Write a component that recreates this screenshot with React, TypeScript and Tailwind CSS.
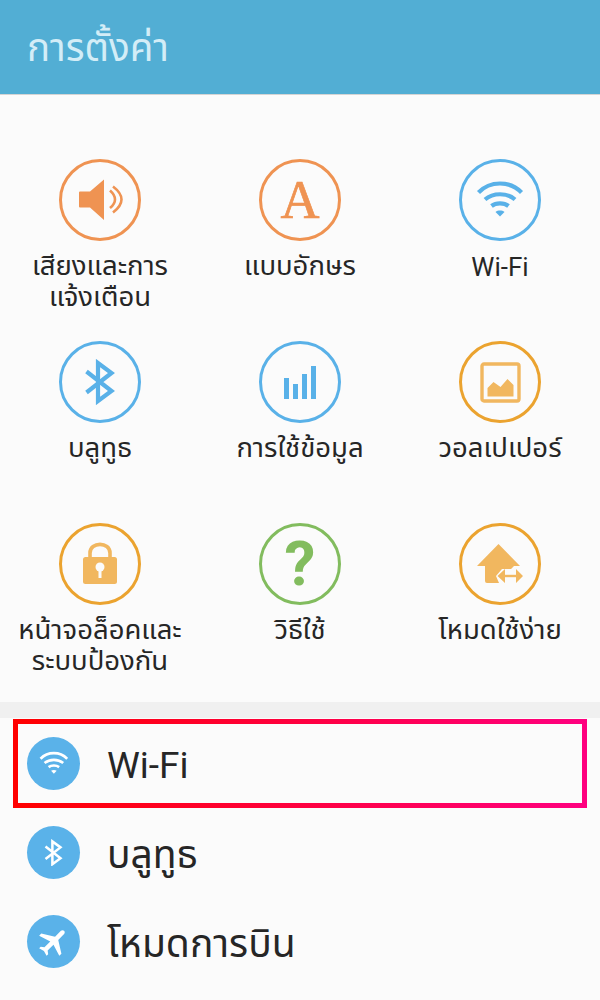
const FONT = "font-['Roboto','Noto_Sans','Noto_Sans_Thai',sans-serif]";

const Wifi = ({ c, s = 1 }: { c: string; s?: number }) => (
  <svg width={48 * s} height={40 * s} viewBox="0 1.5 48 40" fill="none" stroke={c} strokeWidth="4.2">
    <path d="M2.5 14 C14 2 34 2 45.5 14" />
    <path d="M9 21 C17 14 31 14 39 21" />
    <path d="M15.5 27.5 C20 24 28 24 32.5 27.5" />
    <path d="M24 38 L19.5 33.5 C22 31.6 26 31.6 28.5 33.5 Z" fill={c} stroke="none" />
  </svg>
);

const Bt = ({ c, s = 1 }: { c: string; s?: number }) => (
  <svg width={32 * s} height={46 * s} viewBox="0 0 32 46" fill="none" stroke={c} strokeWidth="4.2">
    <path d="M2.5 12.5 L27.5 32 L14 42 V4 L27.5 14 L2.5 33.5" />
  </svg>
);

const Speaker = () => (
  <svg className="ml-px" width="44" height="42" viewBox="0 0 44 42">
    <path d="M1 12.5 H11 L25 0.5 V41 L11 28.5 H1 Q0 28.5 0 27.5 V13.5 Q0 12.5 1 12.5 Z" fill="#ef9352" />
    <path d="M31 11.5 Q41 20.5 31 29" fill="none" stroke="#ef9352" strokeWidth="2.6" />
    <path d="M34 7.5 Q51 20.5 34 33.5" fill="none" stroke="#ef9352" strokeWidth="2.6" />
  </svg>
);

const Bars = () => (
  <svg width="32" height="33" viewBox="0 0 32 33" fill="#59b1e8">
    <rect x="0" y="12" width="5" height="21" />
    <rect x="9" y="18" width="5" height="15" />
    <rect x="18" y="8" width="5" height="25" />
    <rect x="27" y="0" width="5" height="33" />
  </svg>
);

const Picture = () => (
  <svg width="41" height="41" viewBox="0 0 41 41">
    <rect x="2" y="2" width="37" height="37" rx="2" fill="none" stroke="#f1b75f" strokeWidth="3.4" />
    <path d="M7.5 34.5 V26 L13.5 20 L20.5 25 L27.5 17 L33.5 23 V34.5 Z" fill="#f1b75f" />
  </svg>
);

const Lock = () => (
  <svg className="mb-[5px]" width="36" height="44" viewBox="0 0 36 44">
    <path d="M8 19 V13 C8 1.5 28 1.5 28 13 V19" fill="none" stroke="#f1b75f" strokeWidth="3.6" />
    <rect x="1" y="17" width="34" height="27" rx="2.5" fill="#f1b75f" />
    <circle cx="18" cy="27" r="4.5" fill="#fbfbfb" />
    <rect x="16.5" y="28" width="3" height="10" fill="#fbfbfb" />
  </svg>
);

const Home = () => (
  <svg width="46" height="40" viewBox="0 0 46 40">
    <path d="M21.5 0 L43 22 H37 L34 25 H25 L19 32 L22 39 H10 Q8 39 8 37 V22 H0 Z" fill="#f1b75f" />
    <path d="M27 32 H40" stroke="#f1b75f" strokeWidth="2.4" />
    <path d="M20.5 32 L28 25 V39 Z M46 32 L39 25 V39 Z" fill="#f1b75f" />
  </svg>
);

const Plane = () => (
  <svg width="36" height="36" viewBox="0 0 24 24" fill="#fff">
    <path
      transform="rotate(45 12 12)"
      d="M21 16v-2l-8-5V3.5c0-.83-.67-1.5-1.5-1.5S10 2.67 10 3.5V9l-8 5v2l8-2.5V19l-2 1.5V22l3.5-1 3.5 1v-1.5L13 19v-5.5l8 2.5z"
    />
  </svg>
);

const Tile = ({ ring, label, latin, children }: { ring: string; label: string[]; latin?: boolean; children: React.ReactNode }) => (
  <div className="flex h-[182px] flex-col items-center">
    <div className={`flex h-[82px] w-[82px] items-center justify-center rounded-full border-[3px] ${ring}`}>{children}</div>
    <div className={`text-center leading-[31px] text-[#262626] ${latin ? "mt-[11px] text-[26px]" : "mt-[9px] text-[27.5px]"}`}>
      {label.map((l) => (
        <div key={l} className="whitespace-nowrap">{l}</div>
      ))}
    </div>
  </div>
);

const Row = ({ label, latin, children }: { label: string; latin?: boolean; children: React.ReactNode }) => (
  <div className="flex h-[89px] items-center pl-[27px]">
    <div className="flex h-[53px] w-[53px] items-center justify-center rounded-full bg-[#5ab2e9]">{children}</div>
    <div className={`ml-[27px] leading-none text-[#262626] ${latin ? "mt-[4px] text-[37px]" : "mt-[6px] text-[39px]"}`}>{label}</div>
  </div>
);

export default function App() {
  return (
    <div className={`h-[1000px] w-[600px] overflow-hidden bg-[#fbfbfb] ${FONT}`}>
      <header className="flex h-[95px] items-center border-b border-[#d4d4d4] bg-[#52aed4] pl-[27px]">
        <h1 className="mt-[3px] text-[38.5px] font-normal leading-none text-[#d3edf7]">การตั้งค่า</h1>
      </header>
      <section className="grid h-[607px] grid-cols-3 content-start pt-[64px]">
        <Tile ring="border-[#ef9352]" label={["เสียงและการ", "แจ้งเตือน"]}><Speaker /></Tile>
        <Tile ring="border-[#ef9352]" label={["แบบอักษร"]}>
          <span className="font-['Liberation_Serif',serif] text-[54px] font-normal leading-none text-[#ef9352] [-webkit-text-stroke:0.7px_#ef9352]">A</span>
        </Tile>
        <Tile ring="border-[#59b1e8]" label={["Wi-Fi"]} latin><Wifi c="#59b1e8" /></Tile>
        <Tile ring="border-[#59b1e8]" label={["บลูทูธ"]}><Bt c="#59b1e8" /></Tile>
        <Tile ring="border-[#59b1e8]" label={["การใช้ข้อมูล"]}><Bars /></Tile>
        <Tile ring="border-[#eba32f]" label={["วอลเปเปอร์"]}><Picture /></Tile>
        <Tile ring="border-[#eba32f]" label={["หน้าจอล็อคและ", "ระบบป้องกัน"]}><Lock /></Tile>
        <Tile ring="border-[#82bc5e]" label={["วิธีใช้"]}>
          <span className="font-['Roboto',sans-serif] text-[62px] font-bold leading-none text-[#82bc5e]">?</span>
        </Tile>
        <Tile ring="border-[#eba32f]" label={["โหมดใช้ง่าย"]}><Home /></Tile>
      </section>
      <div className="h-[16px] bg-[#f0f0f0]" />
      <section className="pt-px">
        <div className="relative">
          <Row label="Wi-Fi" latin><Wifi c="#fff" s={0.62} /></Row>
          <div className="absolute left-[13px] top-0 h-[89px] w-[574px] border-[5px] [border-image:linear-gradient(90deg,#ff0000,#ff007f)_1]" />
        </div>
        <Row label="บลูทูธ"><Bt c="#fff" s={0.6} /></Row>
        <Row label="โหมดการบิน"><Plane /></Row>
      </section>
    </div>
  );
}
